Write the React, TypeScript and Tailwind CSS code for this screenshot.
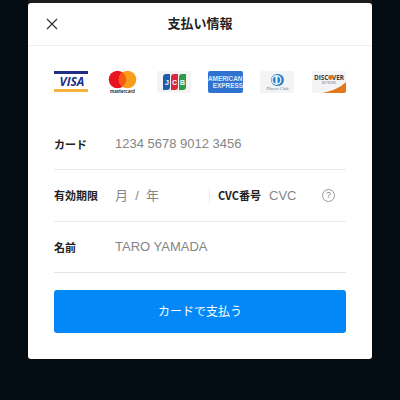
import { useState } from "react";

const VisaLogo = () => (
  <svg viewBox="0 0 35 24" className="w-[35px] h-6" role="img" aria-label="VISA">
    <rect x="0" y="1" width="34" height="3" fill="#1f2f86" />
    <rect x="0" y="19" width="34" height="3" fill="#f3b33e" />
    <text
      x="18"
      y="16"
      textAnchor="middle"
      fontSize="12"
      fontWeight="700"
      fontStyle="italic"
      fontFamily="Open Sans, sans-serif"
      fill="#1f2f86"
    >
      VISA
    </text>
  </svg>
);

const MastercardLogo = () => (
  <svg viewBox="0 0 35 24" className="w-[35px] h-6" role="img" aria-label="mastercard">
    <circle cx="12.5" cy="9.5" r="8.8" fill="#e8141f" />
    <circle cx="22.5" cy="9.5" r="8.8" fill="#f79e1b" />
    <path d="M17.5 2.3a8.8 8.8 0 0 1 0 14.4a8.8 8.8 0 0 1 0-14.4z" fill="#fa5a14" />
    <text
      x="17.5"
      y="23"
      textAnchor="middle"
      fontSize="5"
      fontWeight="700"
      fontFamily="Lato, sans-serif"
      fill="#222222"
    >
      mastercard
    </text>
  </svg>
);

const JcbLogo = () => (
  <svg viewBox="0 0 35 24" className="w-[35px] h-6" role="img" aria-label="JCB">
    <rect x="0" y="1" width="34" height="22" rx="2" fill="#f4f4f5" />
    <path d="M9 4h4v13a3 3 0 0 1-3 3H6V7a3 3 0 0 1 3-3z" fill="#1d5fae" />
    <path d="M17 4h4v13a3 3 0 0 1-3 3h-4V7a3 3 0 0 1 3-3z" fill="#d8283f" />
    <path d="M25 4h4v13a3 3 0 0 1-3 3h-4V7a3 3 0 0 1 3-3z" fill="#2f9a48" />
    <g
      fontSize="7"
      fontWeight="700"
      fontFamily="Liberation Sans, sans-serif"
      fill="#ffffff"
      textAnchor="middle"
    >
      <text x="10" y="15">J</text>
      <text x="17.5" y="15">C</text>
      <text x="25.5" y="15">B</text>
    </g>
  </svg>
);

const AmexLogo = () => (
  <svg viewBox="0 0 35 24" className="w-[35px] h-6" role="img" aria-label="American Express">
    <rect x="0" y="1" width="35" height="22" rx="2" fill="#2f72cf" />
    <g
      fontSize="6.4"
      fontWeight="700"
      fontFamily="Liberation Sans, sans-serif"
      fill="#dceafb"
    >
      <text x="0" y="11">
        AMERICAN
      </text>
      <text x="35" y="18" textAnchor="end">
        EXPRESS
      </text>
    </g>
  </svg>
);

const DinersLogo = () => (
  <svg viewBox="0 0 35 24" className="w-[35px] h-6" role="img" aria-label="Diners Club">
    <rect x="0" y="1" width="34" height="22" rx="2" fill="#f3f4f6" />
    <path d="M16 4h2a6 6 0 0 1 0 12h-2z" fill="#2f86cc" />
    <circle cx="17" cy="10" r="6" fill="#2f86cc" />
    <circle cx="16.5" cy="10" r="5" fill="#f3f4f6" />
    <path d="M15.5 6.5a3.6 3.6 0 0 0 0 7zM17.5 6.5a3.6 3.6 0 0 1 0 7z" fill="#2f86cc" />
    <text
      x="17.5"
      y="20"
      textAnchor="middle"
      fontSize="4.5"
      fontFamily="Liberation Serif, serif"
      fill="#6f8092"
    >
      Diners Club
    </text>
  </svg>
);

const DiscoverLogo = () => (
  <svg viewBox="0 0 35 24" className="w-[35px] h-6" role="img" aria-label="Discover Network">
    <rect x="1" y="1" width="34" height="22" rx="2" fill="#f3f4f5" />
    <path d="M35 12v9a2 2 0 0 1-2 2H11c10-2 18-5 24-11z" fill="#e3771c" />
    <g
      fontSize="6.4"
      fontWeight="700"
      fontFamily="Open Sans, sans-serif"
      fill="#3a3a3d"
    >
      <text x="3" y="10">DISC</text>
      <text x="33" y="10" textAnchor="end">VER</text>
    </g>
    <circle cx="19.5" cy="7.5" r="2.4" fill="#e3771c" />
    <text
      x="18"
      y="14"
      textAnchor="middle"
      fontSize="3"
      fontFamily="Open Sans, sans-serif"
      fill="#77777a"
    >
      NETWORK
    </text>
  </svg>
);

const labelClass =
  "text-[11px] font-bold text-[#222222] whitespace-nowrap font-['Noto_Sans_CJK_JP',sans-serif]";
const inputClass =
  "min-w-0 bg-transparent text-[13px] text-[#333333] placeholder:text-[#858585] outline-none";

const App = () => {
  const [card, setCard] = useState("");
  const [expiry, setExpiry] = useState("");
  const [cvc, setCvc] = useState("");
  const [name, setName] = useState("");

  return (
    <main className="min-h-screen bg-[#050d14] px-7 pb-10 font-['Liberation_Sans','Noto_Sans_CJK_JP',sans-serif]">
      <div className="h-[3px] bg-[#1c1c1c]" />
      <section className="rounded-[3px] bg-white">
        <header className="grid grid-cols-[1fr_auto_1fr] items-center h-[43px] px-[18px] border-b border-[#eeeeee]">
          <button type="button" aria-label="閉じる" className="justify-self-start">
            <svg viewBox="0 0 12 12" className="w-3 h-3" stroke="#333333" strokeWidth="1.2">
              <path d="M1 1l10 10M11 1L1 11" />
            </svg>
          </button>
          <h1 className="text-[13px] font-bold text-[#222222]">支払い情報</h1>
        </header>

        <form className="px-[26px] pb-[26px]" onSubmit={(e) => e.preventDefault()}>
          <div className="flex justify-between pt-6 pb-[25px]">
            <VisaLogo />
            <MastercardLogo />
            <JcbLogo />
            <AmexLogo />
            <DinersLogo />
            <DiscoverLogo />
          </div>

          <div className="flex items-center h-[51px] border-b border-[#ebebeb]">
            <label htmlFor="card" className={`${labelClass} w-[61px]`}>
              カード
            </label>
            <input
              id="card"
              inputMode="numeric"
              placeholder="1234 5678 9012 3456"
              className={`${inputClass} flex-1`}
              value={card}
              onChange={(e) => setCard(e.target.value)}
            />
          </div>

          <div className="flex items-center h-[52px] border-b border-[#ebebeb]">
            <label htmlFor="expiry" className={`${labelClass} w-[61px]`}>
              有効期限
            </label>
            <input
              id="expiry"
              placeholder="月  /  年"
              className={`${inputClass} flex-1`}
              value={expiry}
              onChange={(e) => setExpiry(e.target.value)}
            />
            <label
              htmlFor="cvc"
              className={`${labelClass} flex items-center h-4 pl-2 border-l border-[#eeeeee]`}
            >
              CVC番号
            </label>
            <input
              id="cvc"
              inputMode="numeric"
              placeholder="CVC"
              className={`${inputClass} w-[53px] ml-2`}
              value={cvc}
              onChange={(e) => setCvc(e.target.value)}
            />
            <button
              type="button"
              aria-label="CVC番号とは"
              className="flex items-center justify-center w-[13px] h-[13px] mr-[11px] rounded-full border border-[#999999] text-[9px] leading-none text-[#888888]"
            >
              ?
            </button>
          </div>

          <div className="flex items-center h-[51px] border-b border-[#e4e4e4]">
            <label htmlFor="name" className={`${labelClass} w-[61px]`}>
              名前
            </label>
            <input
              id="name"
              placeholder="TARO YAMADA"
              className={`${inputClass} flex-1`}
              value={name}
              onChange={(e) => setName(e.target.value)}
            />
          </div>

          <button
            type="submit"
            className="w-full h-[43px] mt-[17px] rounded-[3px] bg-[#0588f7] text-xs text-white"
          >
            カードで支払う
          </button>
        </form>
      </section>
    </main>
  );
};

export default App;
